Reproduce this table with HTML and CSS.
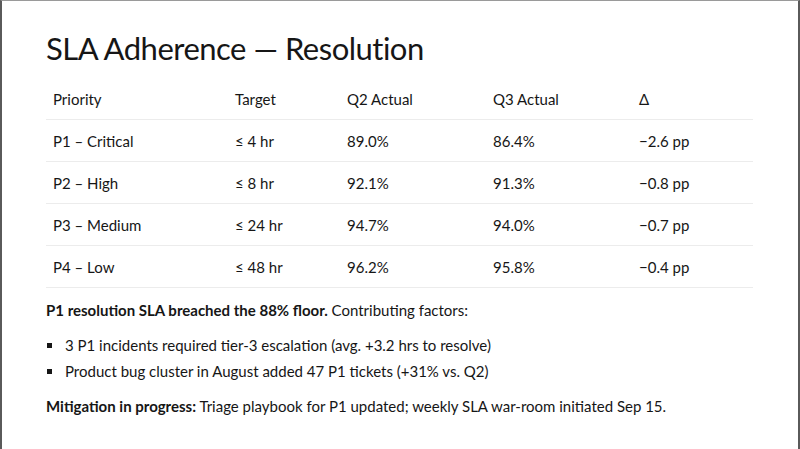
FILE: index.html
```html
<!DOCTYPE html>
<html>
<head>
<meta charset="utf-8">
<link rel="stylesheet" href="styles.css">
</head>
<body>
<div class="slide">
  <h1 class="title">SLA Adherence — Resolution</h1>
  <div class="table">
    <div class="row head">
      <div class="cell">Priority</div>
      <div class="cell">Target</div>
      <div class="cell">Q2 Actual</div>
      <div class="cell">Q3 Actual</div>
      <div class="cell">Δ</div>
    </div>
    <div class="row">
      <div class="cell">P1 – Critical</div>
      <div class="cell">≤ 4 hr</div>
      <div class="cell">89.0%</div>
      <div class="cell">86.4%</div>
      <div class="cell">−2.6 pp</div>
    </div>
    <div class="row">
      <div class="cell">P2 – High</div>
      <div class="cell">≤ 8 hr</div>
      <div class="cell">92.1%</div>
      <div class="cell">91.3%</div>
      <div class="cell">−0.8 pp</div>
    </div>
    <div class="row">
      <div class="cell">P3 – Medium</div>
      <div class="cell">≤ 24 hr</div>
      <div class="cell">94.7%</div>
      <div class="cell">94.0%</div>
      <div class="cell">−0.7 pp</div>
    </div>
    <div class="row">
      <div class="cell">P4 – Low</div>
      <div class="cell">≤ 48 hr</div>
      <div class="cell">96.2%</div>
      <div class="cell">95.8%</div>
      <div class="cell">−0.4 pp</div>
    </div>
  </div>
  <p class="lead"><strong>P1 resolution SLA breached the 88% floor.</strong> Contributing factors:</p>
  <ul class="bullets">
    <li>3 P1 incidents required tier-3 escalation (avg. +3.2 hrs to resolve)</li>
    <li>Product bug cluster in August added 47 P1 tickets (+31% vs. Q2)</li>
  </ul>
  <p class="note"><strong>Mitigation in progress:</strong> Triage playbook for P1 updated; weekly SLA war-room initiated Sep 15.</p>
</div>
</body>
</html>
```

FILE: styles.css
```css
html, body {
  margin: 0;
  padding: 0;
  background: #fff;
}

body {
  font-family: "Lato", "Noto Sans", sans-serif;
  color: #161616;
  width: 800px;
  height: 449px;
  overflow: hidden;
}

.slide {
  box-sizing: border-box;
  width: 800px;
  height: 449px;
  border-top: 1px solid #9a9a9a;
  border-left: 2px solid #5a5a5a;
  border-right: 2px solid #5a5a5a;
  padding: 0 45px 0 44px;
  display: flex;
  flex-direction: column;
}

.title {
  margin: 27px 0 0 0;
  font-size: 31px;
  font-weight: 400;
  line-height: 40px;
  letter-spacing: -0.5px;
}

.table {
  margin-top: 10px;
  display: flex;
  flex-direction: column;
  width: 707px;
}

.row {
  display: grid;
  grid-template-columns: 182px 112px 146px 146px 121px;
  height: 41px;
  align-items: center;
  border-bottom: 1px solid #ececec;
  font-size: 15px;
}

.cell {
  padding-left: 7px;
}

.lead {
  margin: 12px 0 0 0;
  font-size: 15px;
  line-height: 20px;
}

.bullets {
  margin: 12px 0 0 0;
  padding: 0;
  list-style: none;
  font-size: 15px;
  line-height: 26px;
}

.bullets li {
  display: flex;
  align-items: center;
  gap: 13px;
}

.bullets li::before {
  content: "";
  width: 5px;
  height: 5px;
  margin-left: 1px;
  background: #161616;
  flex: none;
}

.note {
  margin: 12px 0 0 0;
  font-size: 15px;
  line-height: 20px;
}

strong {
  font-weight: 700;
}
```
